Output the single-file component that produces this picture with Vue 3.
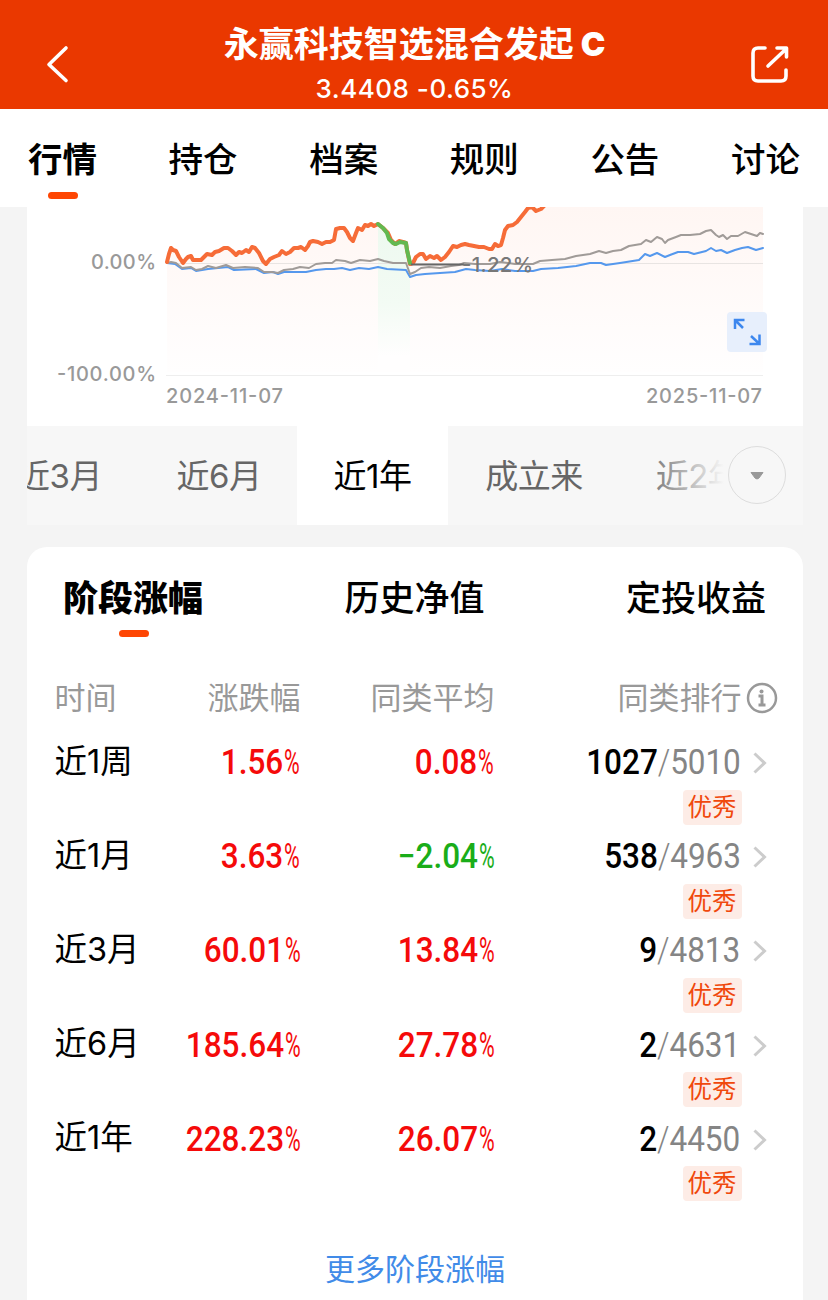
<template>
  <div class="page">
    <header class="header">
      <svg class="back" width="28" height="44" viewBox="0 0 28 44">
        <path d="M23 6 L6 22.5 L23 38.5" />
      </svg>
      <div class="heading">
        <div class="title">永赢科技智选混合发起<span class="title-class">C</span></div>
        <div class="quote">3.4408 -0.65%</div>
      </div>
      <svg class="share" width="44" height="44" viewBox="0 0 44 44">
        <path d="M17 6 H10 Q5 6 5 11 V34 Q5 39 10 39 H33 Q38 39 38 34 V28" />
        <path d="M20 24 L38 7 M29 6 H38.5 V15" />
      </svg>
    </header>

    <nav class="tabs">
      <div v-for="tab in tabs" :key="tab" class="tab" :class="{ active: tab === activeTab }" @click="activeTab = tab">
        {{ tab }}
      </div>
    </nav>

    <section class="chart-card">
      <svg class="chart" viewBox="27 207 776 219">
        <defs>
          <linearGradient id="fundFill" gradientUnits="userSpaceOnUse" x1="0" y1="207" x2="0" y2="372">
            <stop offset="0" stop-color="#fff6f3" />
            <stop offset="1" stop-color="#fffefe" />
          </linearGradient>
          <linearGradient id="dropFill" gradientUnits="userSpaceOnUse" x1="0" y1="225" x2="0" y2="356">
            <stop offset="0" stop-color="#edf9ef" />
            <stop offset="0.6" stop-color="#f3fbf4" />
            <stop offset="1" stop-color="#fffefe" />
          </linearGradient>
        </defs>
        <path :d="area(fundLine)" fill="url(#fundFill)" />
        <path :d="area(dropLine)" fill="url(#dropFill)" />
        <path d="M166 263.5H763" stroke="#e8e4e2" />
        <path d="M166 375.5H763" stroke="#eeeeee" />
        <polyline :points="indexLine" class="line index" />
        <polyline :points="averageLine" class="line average" />
        <polyline :points="fundLine" class="line fund" />
        <polyline :points="dropLine" class="line drop" />
        <path d="M411 264.5H464" stroke="#666" stroke-width="1.8" />
        <text x="462" y="272" class="drop-label" textLength="71">-1.22%</text>
        <g class="axis">
          <text x="91" y="268.5" textLength="65">0.00%</text>
          <text x="57" y="380.5" textLength="99">-100.00%</text>
          <text x="166" y="403" textLength="117">2024-11-07</text>
          <text x="646" y="403" textLength="116">2025-11-07</text>
        </g>
        <g class="expand">
          <rect x="727" y="312" width="40" height="40" rx="4" />
          <path d="M735 329V320H744.5 M735.5 320.5L743 328 M749.5 344H759.5V334.5 M759 343.5L751 336" />
        </g>
      </svg>

      <div class="ranges">
        <div class="range-track">
          <div
            v-for="r in ranges"
            :key="r.name"
            class="range"
            :class="{ active: r.name === activeRange }"
            :style="{ width: r.width + 'px' }"
            @click="activeRange = r.name"
          >
            {{ r.name }}
          </div>
        </div>
        <div class="fade">
          <div class="more-ranges">
            <svg width="16" height="12" viewBox="0 0 16 12">
              <path d="M2 2.5H14L10 8Q8 10 6 8Z" fill="#999" stroke="#999" stroke-linejoin="round" />
            </svg>
          </div>
        </div>
      </div>
    </section>

    <section class="perf-card">
      <div class="perf-tabs">
        <div class="perf-tab active">阶段涨幅</div>
        <div class="perf-tab">历史净值</div>
        <div class="perf-tab">定投收益</div>
      </div>

      <div class="grid grid-head">
        <span>时间</span>
        <span class="right">涨跌幅</span>
        <span class="right">同类平均</span>
        <span class="right">同类排行</span>
        <svg class="info" width="32" height="32" viewBox="0 0 32 32">
          <circle cx="16" cy="16" r="14" fill="none" stroke="#999" stroke-width="2.5" />
          <circle cx="15.5" cy="9.5" r="2" fill="#999" />
          <path d="M12.5 14H16V22.5M12.5 23H19.5" fill="none" stroke="#999" stroke-width="3" />
        </svg>
      </div>

      <div v-for="row in rows" :key="row.period" class="grid row">
        <span class="period">{{ row.period }}</span>
        <span class="right" :class="tone(row.change)"><b class="num">{{ row.change }}<i>%</i></b></span>
        <span class="right" :class="tone(row.average)"><b class="num">{{ row.average }}<i>%</i></b></span>
        <span class="right rank"><b class="num">{{ row.rank }}<em><span class="slash">/</span>{{ row.total }}</em></b></span>
        <svg class="chevron" width="16" height="24" viewBox="0 0 16 24">
          <path d="M2.5 2.5L12.5 12L2.5 21.5" />
        </svg>
        <span class="badge">优秀</span>
      </div>

      <div class="more">更多阶段涨幅</div>
    </section>
  </div>
</template>

<script setup>
import { ref } from 'vue'

const tabs = ['行情', '持仓', '档案', '规则', '公告', '讨论']
const activeTab = ref('行情')

const ranges = [
  { name: '近3月', width: 163 },
  { name: '近6月', width: 156 },
  { name: '近1年', width: 151 },
  { name: '成立来', width: 172 },
  { name: '近2年', width: 156 },
]
const activeRange = ref('近1年')

const rows = [
  { period: '近1周', change: '1.56', average: '0.08', rank: '1027', total: '5010' },
  { period: '近1月', change: '3.63', average: '−2.04', rank: '538', total: '4963' },
  { period: '近3月', change: '60.01', average: '13.84', rank: '9', total: '4813' },
  { period: '近6月', change: '185.64', average: '27.78', rank: '2', total: '4631' },
  { period: '近1年', change: '228.23', average: '26.07', rank: '2', total: '4450' },
]

const tone = (v) => (v.startsWith('−') ? 'down' : 'up')

// Chart series, the fund line runs off the top of the visible area
const fundLine =
  '167,262 169,254 171,248 173,250 176,251 179,257 183,263 186,259 188,257 191,256 193,260 197,260 201,260 204,257 207,254 212,255 215,252 219,251 224,248 228,248 232,251 236,255 239,252 242,253 246,250 249,252 252,247 255,248 259,253 263,261 266,264 270,259 274,257 279,255 282,251 286,254 290,252 294,248 298,248 301,247 305,250 308,246 310,242 313,241 318,242 322,244 326,242 330,242 334,240 336,229 340,228 344,228 347,232 350,238 353,241 356,233 358,228 362,230 365,225 368,226 371,224 374,226 378,224 383,228 388,233 391,240 395,244 399,241 403,242 406,243 407,250 410,264 413,263 416,257 420,254 423,254 426,259 430,256 434,258 437,256 441,260 445,257 449,252 453,246 457,247 461,245 465,244 469,245 474,246 479,247 484,247 489,249 492,249 495,244 498,246 501,245 503,238 505,230 508,226 513,225 517,222 521,217 525,212 528,208 532,207 536,211 541,209 545,205 552,198 763,198'
const dropLine = '378,224 383,228 387,233 389,239 393,243 396,244 400,242 406,243 407,250 410,263'
const averageLine =
  '167,263 171,262 176,263 182,268 191,267 196,270 202,269 208,266 216,268 226,265 233,268 245,267 258,268 264,272 272,272 278,273 284,270 293,269 300,267 309,268 316,264 325,263 332,263 336,260 345,261 351,263 360,260 370,261 378,259 384,261 393,263 406,263 410,274 415,272 421,268 429,267 440,268 451,266 459,265 464,263 475,264 490,264 500,262 515,264 533,264 540,261 552,260 565,259 576,256 590,254 599,251 606,253 613,251 621,250 629,246 641,244 646,240 651,242 657,237 662,239 665,243 668,240 676,237 681,235 690,235 700,234 706,231 711,230 716,235 719,237 723,235 727,239 731,236 738,236 745,232 751,234 757,236 760,233 763,234'
const indexLine =
  '167,263 175,264 182,269 191,268 196,271 208,269 218,268 228,267 234,270 256,269 264,273 273,272 278,274 284,272 306,272 316,270 326,269 334,269 342,268 350,270 359,268 369,269 378,267 387,269 406,270 410,277 416,275 425,274 440,273 455,272 466,269 475,270 490,271 502,269 515,271 533,271 541,269 558,268 576,266 590,263 601,263 606,265 620,263 639,260 645,254 650,256 657,253 665,257 670,255 678,252 688,252 694,254 706,251 711,248 716,251 721,250 727,253 735,250 742,248 748,247 756,250 763,248'

function area(points) {
  const pts = points.split(' ')
  const first = pts[0].split(',')[0]
  const last = pts[pts.length - 1].split(',')[0]
  return `M${first},372 L${pts.join(' L')} L${last},372 Z`
}
</script>

<style>
body {
  margin: 0;
  background: #f4f4f4;
}
</style>

<style scoped>
.page {
  width: 828px;
  height: 1300px;
  overflow: hidden;
  display: flex;
  flex-direction: column;
  background: #f4f4f4;
  color: #000;
  font-family: Inter, 'Noto Sans CJK SC', sans-serif;
}

/* Header */
.header {
  height: 109px;
  box-sizing: border-box;
  padding: 20px 36px 0 43px;
  display: flex;
  justify-content: space-between;
  background: #ea3800;
  color: #fff;
}
.header svg {
  fill: none;
  stroke: #fff;
  stroke-width: 3.6;
  stroke-linecap: round;
  stroke-linejoin: round;
}
.back { margin-top: 22px; }
.share { margin-top: 22px; }
.heading {
  text-align: center;
  margin-left: 10px;
}
.title {
  font-size: 35px;
  font-weight: 700;
  line-height: 48px;
}
.title-class {
  position: relative;
  top: -1px;
  font-size: 33px;
  font-weight: 900;
  margin-left: 7px;
}
.quote {
  font-size: 26px;
  font-weight: 500;
  line-height: 39px;
  letter-spacing: 0.5px;
}

/* Top tabs */
.tabs {
  height: 98px;
  box-sizing: border-box;
  padding: 0 28px;
  display: flex;
  justify-content: space-between;
  background: #fff;
}
.tab {
  font-size: 34.5px;
  font-weight: 500;
  line-height: 101px;
  position: relative;
}
.tab.active { font-weight: 700; }
.tab.active::after,
.perf-tab.active::after {
  content: '';
  position: absolute;
  left: 50%;
  margin-left: -15px;
  width: 30px;
  height: 7px;
  border-radius: 4px;
  background: #fe4603;
}
.tab.active::after { top: 83px; }

/* Chart */
.chart-card {
  margin: 0 25px 0 27px;
  background: #fff;
}
.chart {
  display: block;
  width: 776px;
  height: 219px;
}
.line {
  fill: none;
  stroke-linejoin: round;
  stroke-linecap: round;
}
.fund { stroke: #f66c38; stroke-width: 4; }
.drop { stroke: #62b950; stroke-width: 4; }
.average { stroke: #a09b98; stroke-width: 2; }
.index { stroke: #5598ed; stroke-width: 2; }
.axis {
  fill: #999;
  font-size: 20px;
  font-weight: 500;
}
.drop-label {
  fill: #777;
  font-size: 20.5px;
  font-weight: 500;
}
.expand rect { fill: #e7effc; }
.expand path {
  fill: none;
  stroke: #3d87ee;
  stroke-width: 2.5;
}

/* Range switch */
.ranges {
  position: relative;
  height: 99px;
  overflow: hidden;
  background: #f7f7f7;
}
.range-track {
  display: flex;
  margin-left: -49px;
}
.range {
  flex-shrink: 0;
  text-align: center;
  font-size: 33px;
  line-height: 100px;
  height: 99px;
  letter-spacing: -0.5px;
  color: #666;
}
.range.active {
  background: #fff;
  color: #000;
}
.fade {
  position: absolute;
  top: 0;
  right: 0;
  width: 163px;
  height: 99px;
  display: flex;
  align-items: center;
  justify-content: flex-end;
  background: linear-gradient(90deg, rgba(247, 247, 247, 0), #f7f7f7 84px);
}
.more-ranges {
  width: 56px;
  height: 56px;
  margin: 0 17px 2px 0;
  border: 1px solid #ddd;
  border-radius: 50%;
  display: flex;
  align-items: center;
  justify-content: center;
}
.more-ranges svg { margin: 3px 1px 0 0; }

/* Performance */
.perf-card {
  flex: 1;
  margin: 22px 25px 0 27px;
  border-radius: 20px 20px 0 0;
  background: #fff;
}
.perf-tabs {
  display: flex;
  justify-content: space-between;
  padding: 0 37px 0 36px;
  height: 120px;
}
.perf-tab {
  position: relative;
  font-size: 35px;
  font-weight: 500;
  line-height: 102px;
}
.perf-tab.active { font-weight: 900; }
.perf-tab.active::after {
  top: 83px;
  margin-left: -14px;
}

.grid {
  display: grid;
  grid-template-columns: 100px 146px 194px 247px 1fr;
  padding-left: 27.5px;
  align-items: center;
}
.right { text-align: right; }
.grid-head {
  height: 66px;
  align-items: start;
  font-size: 31px;
  line-height: 62px;
  color: #999;
}
.info { margin-left: 4px; margin-top: 15px; }
.row {
  height: 94.2px;
  grid-template-rows: 60px 35px;
  align-content: start;
}
.period {
  font-size: 32.5px;
  line-height: 56px;
  padding-bottom: 3px;
  white-space: nowrap;
}
.num {
  display: inline-block;
  transform: scaleX(0.9);
  transform-origin: right center;
  font-family: Roboto, sans-serif;
  font-size: 35px;
  font-weight: 500;
  line-height: 60px;
}
.num i {
  display: inline-block;
  transform: scaleX(0.68);
  transform-origin: right center;
  margin-left: -7px;
  font-style: normal;
  font-weight: 400;
}
.num em {
  font-style: normal;
  font-weight: 450;
  letter-spacing: -0.1px;
  color: #858585;
}
.rank { padding-right: 1px; }
.slash { font-weight: 300; }
.up { color: #f50a0a; }
.down { color: #1aad19; }
.chevron {
  margin-left: 10.5px;
  fill: none;
  stroke: #ccc;
  stroke-width: 3;
}
.badge {
  grid-column: 4;
  justify-self: end;
  margin-top: -7px;
  width: 59px;
  height: 35px;
  border-radius: 4px;
  background: #fdece6;
  color: #f0480c;
  font-size: 24.5px;
  line-height: 34px;
  text-align: center;
}
.more {
  margin-top: 43px;
  text-align: center;
  font-size: 30px;
  line-height: 44px;
  color: #418be8;
}
</style>
